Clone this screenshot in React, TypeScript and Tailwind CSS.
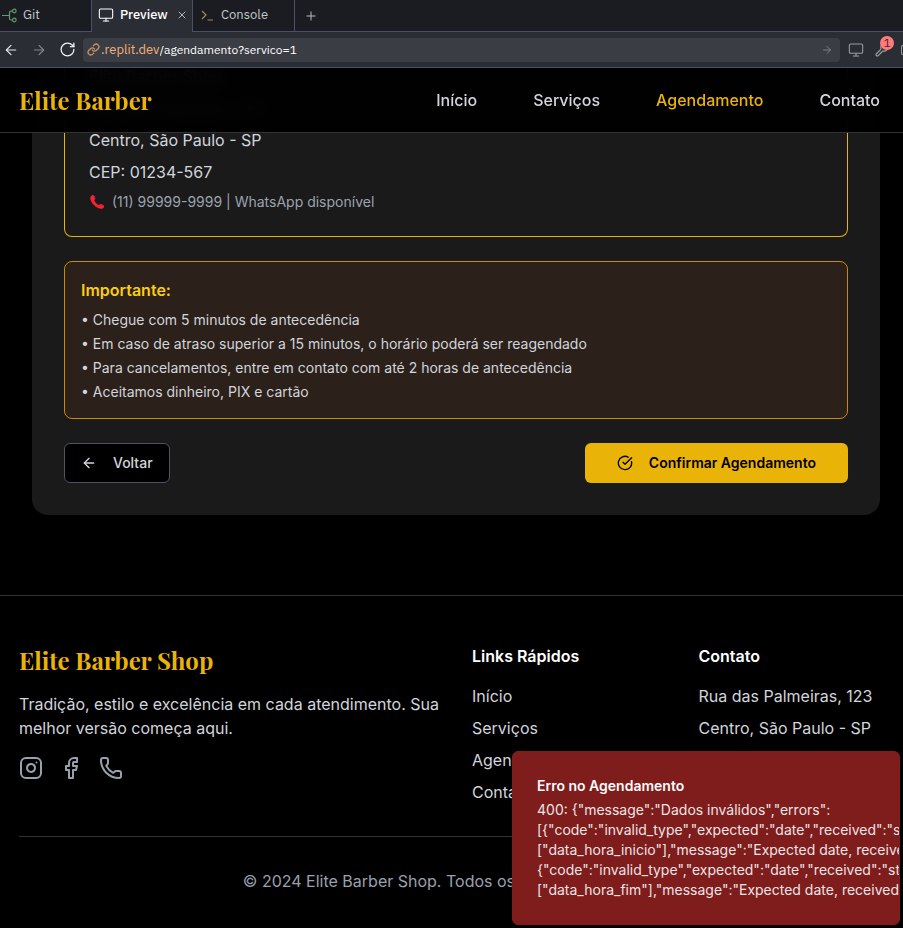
import React from "react";
import {
  ArrowLeft,
  ArrowRight,
  CircleCheckBig,
  Facebook,
  Instagram,
  Monitor,
  Phone,
  Plus,
  RotateCw,
  X,
} from "lucide-react";

const uiFont = "font-['IBM_Plex_Sans',Roboto,sans-serif]";
const brandFont = "font-['Playfair_Display','Liberation_Serif',serif]";

function GitIcon() {
  return (
    <svg width="16" height="16" viewBox="0 0 16 16" fill="none" stroke="#5f9a72" strokeWidth="1.2" aria-hidden="true">
      <path d="M0 8.500H7.500M10.500 4.200H9a1.500 1.500 0 0 0-1.500 1.500v5.800A1.500 1.500 0 0 0 9 13h1.500" />
      <circle cx="12.300" cy="4" r="1.800" />
      <circle cx="12.300" cy="13" r="1.800" />
    </svg>
  );
}

function PromptIcon() {
  return (
    <svg width="14" height="14" viewBox="0 0 14 14" fill="none" stroke="#a08a5c" strokeWidth="1.2" aria-hidden="true">
      <path d="M2 3l4 4-4 4M7.5 12H13" />
    </svg>
  );
}

function ChainIcon() {
  return (
    <svg width="13" height="13" viewBox="0 0 24 24" fill="none" stroke="#c99462" strokeWidth="2.400" strokeLinecap="round" strokeLinejoin="round" aria-hidden="true">
      <path d="M10 13a5 5 0 0 0 7.540.540l3-3a5 5 0 0 0-7.070-7.070l-1.720 1.710" />
      <path d="M14 11a5 5 0 0 0-7.540-.540l-3 3a5 5 0 0 0 7.070 7.070l1.710-1.710" />
    </svg>
  );
}

function ToolIcon() {
  return (
    <svg width="16" height="16" viewBox="0 0 16 16" fill="none" stroke="#9a9ca3" strokeWidth="1.2" strokeLinejoin="round" aria-hidden="true">
      <path d="M7 7.2 2.2 12a1.3 1.3 0 0 0 1.8 1.8L8.8 9a4 4 0 0 0 5-4.800l-2.200 2.200-2-.4-.4-2 2.200-2.200A4 4 0 0 0 7 7.200z" />
    </svg>
  );
}

function HandsetIcon() {
  return (
    <svg width="16" height="16" viewBox="0 0 16 16" aria-hidden="true">
      <path
        d="M2.200 1.900C3.300.7 4.700.8 5.300 1.900l1 2.300c.2.600-.1 1.100-.7 1.500-.4.300-.4.700-.1 1.200 1 1.700 2.300 3 4 3.900.5.300.9.200 1.200-.2.400-.6 1-.8 1.600-.5l2.100 1.100c1 .600 1 1.900 0 2.800-1.200 1.100-3.200 1.100-5.400.1C5.500 12.400 2.600 9.300 1.500 5.800c-.5-1.600-.300-3 .7-3.900z"
        fill="#f8222f"
      />
      <path d="m4.400 1.100 1 .900 1 2.300-.7 1.100zM12.200 10.100l2.300 1.200.7 1.200-3.300-1.600z" fill="#b4176f" />
    </svg>
  );
}

function BrowserChrome() {
  return (
    <div className={`${uiFont} shrink-0 text-[13px] text-[#c2c8cc]`}>
      <div className="flex h-8 border-b border-[#4b5066] bg-[#1b1c21]">
        <button className="flex h-8 w-[91px] items-center gap-1 pb-[2px] pl-[2px]">
          <GitIcon />
          <span className="pl-[1px]">Git</span>
        </button>
        <div className="flex h-8 w-[102px] items-center border-x border-[#4b5066] bg-[#2b2d35] pb-[2px] pl-[6px]">
          <button className="flex items-center gap-[6px] font-medium text-white">
            <Monitor size={16} strokeWidth={1.6} />
            Preview
          </button>
          <button aria-label="Fechar aba" className="ml-auto pr-1">
            <X size={12} strokeWidth={1.8} />
          </button>
        </div>
        <button className="flex h-8 w-[102px] items-center gap-[7px] border-r border-[#4b5066] pb-[2px] pl-[7px]">
          <PromptIcon />
          Console
        </button>
        <button aria-label="Nova aba" className="px-[9px]">
          <Plus size={14} strokeWidth={1.6} />
        </button>
      </div>
      <div className="flex h-9 items-center border-b border-[#4b5066] bg-[#2b2d35]">
        <button aria-label="Voltar página" className="pl-[3px] text-[#e6e8ea]">
          <ArrowLeft size={16} strokeWidth={1.700} />
        </button>
        <button aria-label="Avançar página" className="pl-3 text-[#85888f]">
          <ArrowRight size={16} strokeWidth={1.700} />
        </button>
        <button aria-label="Recarregar" className="pl-3 text-[#f2f3f4]">
          <RotateCw size={17} strokeWidth={1.800} />
        </button>
        <div className="ml-[7px] flex h-6 flex-1 items-center rounded bg-[#3b3d45] pl-1 text-[12px]">
          <ChainIcon />
          <label htmlFor="url" className="pl-[1px] text-[13px] text-[#f0b27a]">
            .replit.dev
          </label>
          <input
            id="url"
            defaultValue="/agendamento?servico=1"
            className="min-w-0 flex-1 bg-transparent text-white outline-none"
          />
          <button aria-label="Ir" className="px-[7px] text-[#85888f]">
            <ArrowRight size={12} strokeWidth={1.800} />
          </button>
        </div>
        <button aria-label="Dispositivo" className="pl-2 text-[#9a9ca3]">
          <Monitor size={16} strokeWidth={1.600} />
        </button>
        <button aria-label="Ferramentas: 1 erro" className="relative ml-[10px]">
          <ToolIcon />
          <span className="absolute -top-[6px] left-[6px] flex h-[14px] w-[14px] items-center justify-center rounded-full bg-[#ff7a7a] text-[12px] leading-none text-[#3b2a30]">
            1
          </span>
        </button>
        <span className="ml-[11px] h-[10px] w-[2px] rounded-l border-y border-l border-[#9a9ca3]" />
      </div>
    </div>
  );
}

const navItems = ["Início", "Serviços", "Agendamento", "Contato"];

function SiteHeader() {
  return (
    <header className="absolute inset-x-0 top-0 z-10 flex h-[65px] items-center justify-between border-b border-[#333333] bg-black/95 pr-[11px] pl-[19px] backdrop-blur-sm">
      <a href="#inicio" className={`${brandFont} text-2xl font-bold text-[#eab308]`}>
        Elite Barber
      </a>
      <nav className="flex gap-8 font-medium">
        {navItems.map((item) => (
          <a
            key={item}
            href="#nav"
            className={item === "Agendamento" ? "px-3 text-[#eab308]" : "px-3 text-gray-300"}
          >
            {item}
          </a>
        ))}
      </nav>
    </header>
  );
}

const notes = [
  "Chegue com 5 minutos de antecedência",
  "Em caso de atraso superior a 15 minutos, o horário poderá ser reagendado",
  "Para cancelamentos, entre em contato com até 2 horas de antecedência",
  "Aceitamos dinheiro, PIX e cartão",
];

function BookingCard() {
  return (
    <main className="pr-[23px] pl-8">
      <div className="rounded-b-2xl bg-[#1a1a1a] px-8 pb-8">
        <section className="rounded-b-lg border-x border-b border-[#eab308] px-6 pb-6 text-gray-300">
          <div className="-mt-1 space-y-2">
            <p className="font-semibold">Elite Barber Shop</p>
            <p>Rua das Palmeiras, 123</p>
            <p>Centro, São Paulo - SP</p>
            <p>CEP: 01234-567</p>
            <p className="flex items-center gap-[7px] text-sm text-[#9ca3af]">
              <HandsetIcon />
              (11) 99999-9999 | WhatsApp disponível
            </p>
          </div>
        </section>
        <section className="mt-6 rounded-lg border border-[#ca8a04] bg-[#2c211a] p-4">
          <h4 className="mb-2 font-semibold text-[#facc15]">Importante:</h4>
          <ul className="space-y-1 text-sm text-gray-300">
            {notes.map((note) => (
              <li key={note}>• {note}</li>
            ))}
          </ul>
        </section>
        <div className="mt-6 flex justify-between text-sm">
          <button className="flex h-10 items-center gap-4 rounded-md border border-gray-600 bg-black px-4 font-medium text-gray-300">
            <ArrowLeft size={16} />
            Voltar
          </button>
          <button className="flex h-10 items-center gap-4 rounded-md bg-[#eab308] px-8 font-semibold text-black">
            <CircleCheckBig size={16} />
            Confirmar Agendamento
          </button>
        </div>
      </div>
    </main>
  );
}

function SiteFooter() {
  return (
    <footer className="mt-20 border-t border-[#333333] pr-[10px] pb-12 pl-[19px] text-gray-300">
      <div className="grid grid-cols-4 gap-8 pt-12">
        <div className="col-span-2">
          <h3 className={`${brandFont} mb-4 text-2xl font-bold text-[#eab308]`}>
            Elite Barber Shop
          </h3>
          <p className="mb-4">
            Tradição, estilo e excelência em cada atendimento. Sua melhor versão começa aqui.
          </p>
          <div className="flex gap-4 text-gray-400">
            <a href="#instagram" aria-label="Instagram">
              <Instagram size={24} />
            </a>
            <a href="#facebook" aria-label="Facebook">
              <Facebook size={24} />
            </a>
            <a href="#telefone" aria-label="Telefone">
              <Phone size={24} />
            </a>
          </div>
        </div>
        <div>
          <h4 className="mb-4 font-semibold text-white">Links Rápidos</h4>
          <ul className="space-y-2">
            {navItems.map((item) => (
              <li key={item}>
                <a href="#nav">{item}</a>
              </li>
            ))}
          </ul>
        </div>
        <div>
          <h4 className="mb-4 font-semibold text-white">Contato</h4>
          <ul className="space-y-2">
            <li>Rua das Palmeiras, 123</li>
            <li>Centro, São Paulo - SP</li>
          </ul>
        </div>
      </div>
      <div className="mt-8 border-t border-[#333333] pt-8 text-center text-gray-400">
        <p>© 2024 Elite Barber Shop. Todos os direitos reservados.</p>
      </div>
    </footer>
  );
}

const errorLines = [
  '400: {"message":"Dados inválidos","errors":',
  '[{"code":"invalid_type","expected":"date","received":"string","path":',
  '["data_hora_inicio"],"message":"Expected date, received string"},',
  '{"code":"invalid_type","expected":"date","received":"string","path":',
  '["data_hora_fim"],"message":"Expected date, received string"}]}',
];

function ErrorToast() {
  return (
    <div
      role="alert"
      className="absolute right-[3px] bottom-[3px] z-20 w-[388px] overflow-hidden rounded-md border border-[#7f1d1d] bg-[#7f1d1d] py-6 pl-6 text-sm text-gray-50"
    >
      <p className="mb-1 font-semibold">Erro no Agendamento</p>
      <div className="opacity-90">
        {errorLines.map((line, i) => (
          <p key={i} className="whitespace-nowrap">
            {line}
          </p>
        ))}
      </div>
    </div>
  );
}

export default function App() {
  return (
    <div className="flex h-screen flex-col overflow-hidden bg-black font-[Inter,sans-serif]">
      <BrowserChrome />
      <div className="relative min-h-0 flex-1 overflow-hidden">
        <SiteHeader />
        <BookingCard />
        <SiteFooter />
        <ErrorToast />
      </div>
    </div>
  );
}
